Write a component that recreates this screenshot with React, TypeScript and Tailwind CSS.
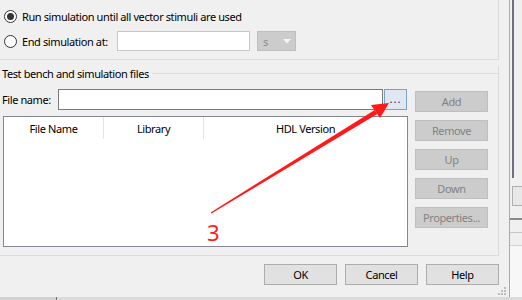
import React from 'react';

const Radio = ({ checked }: { checked?: boolean }) => (
  <span className="w-[13px] h-[13px] rounded-full border border-[#333333] bg-white flex items-center justify-center shrink-0">
    {checked && <span className="w-[7px] h-[7px] rounded-full bg-[#333333]" />}
  </span>
);

const SideButton = ({ label }: { label: string }) => (
  <div className="w-[73px] h-[21px] bg-[#cccccc] border border-[#bfbfbf] text-[#838383] flex items-center justify-center">
    {label}
  </div>
);

const DialogButton = ({ label }: { label: string }) => (
  <div className="w-[73px] h-[21px] bg-[#e1e1e1] border border-[#adadad] text-black flex items-center justify-center">
    {label}
  </div>
);

const App = () => {
  return (
    <div className="relative w-[522px] h-[300px] overflow-hidden bg-[#d9d9d9] text-[11px] tracking-[-0.4px] text-black font-['Noto_Sans','Open_Sans',sans-serif] leading-none whitespace-nowrap">
      <div className="flex h-[297px]">
        {/* dialog */}
        <div className="relative w-[510px] bg-[#f0f0f0] border-r border-[#a8a8a8] pr-[10px] flex flex-col">
          {/* simulation period group */}
          <div className="h-[60px] border-r border-b border-[#dcdcdc] pt-[6px] flex flex-col gap-[5px]">
            <div className="h-[20px] flex items-center pl-[4px] gap-[5px]">
              <Radio checked />
              <span>Run simulation until all vector stimuli are used</span>
            </div>
            <div className="h-[20px] flex items-center pl-[4px]">
              <Radio />
              <span className="ml-[5px] w-[95px]">End simulation at:</span>
              <div className="w-[133px] h-[20px] bg-white border border-[#c8c8c8]" />
              <div className="ml-[7px] w-[39px] h-[20px] bg-[#cccccc] border border-[#bfbfbf] flex items-center justify-between pl-[5px] pr-[4px] text-[#8c8c8c]">
                <span>s</span>
                <svg width="8" height="5" viewBox="0 0 8 5">
                  <path d="M0 0 H8 L4 4.5 Z" fill="#f4f4f4" />
                </svg>
              </div>
            </div>
          </div>

          {/* test bench group */}
          <div className="mt-[6px] h-[190px] border-r border-b border-[#dcdcdc] flex flex-col">
            <div className="h-[14px] flex items-center pl-[2px]">
              <span>Test bench and simulation files</span>
              <div className="flex-1 ml-[3px] h-px bg-[#dcdcdc]" />
            </div>
            <div className="mt-[9px] flex">
              <div className="w-[408px] flex flex-col">
                <div className="h-[21px] flex items-center pl-[2px]">
                  <span className="w-[56px]">File name:</span>
                  <div className="w-[325px] h-[21px] bg-white border border-[#7a7a7a]" />
                  <div className="ml-[1px] w-[23px] h-[21px] bg-[#dfe7f0] border border-[#7ba2cc] flex items-end justify-center text-[#1a1a5a] tracking-[1px] pb-[5px]">
                    ...
                  </div>
                </div>
                <div className="mt-[6px] ml-[3px] w-[405px] h-[131px] bg-white border border-[#828790]">
                  <div className="h-[22px] flex">
                    <div className="w-[100px] border-r border-[#e5e5e5] flex items-center justify-center">File Name</div>
                    <div className="w-[100px] border-r border-[#e5e5e5] flex items-center justify-center">Library</div>
                    <div className="flex-1 flex items-center justify-center">HDL Version</div>
                  </div>
                </div>
              </div>
              <div className="ml-[7px] pt-[2px] flex flex-col gap-[8px]">
                <SideButton label="Add" />
                <SideButton label="Remove" />
                <SideButton label="Up" />
                <SideButton label="Down" />
                <SideButton label="Properties..." />
              </div>
            </div>
          </div>

          {/* dialog buttons */}
          <div className="mt-[8px] flex justify-end gap-[8px]">
            <DialogButton label="OK" />
            <DialogButton label="Cancel" />
            <DialogButton label="Help" />
          </div>

          {/* resize grip */}
          <svg className="absolute right-[2px] bottom-[1px]" width="10" height="10" viewBox="0 0 10 10">
            <rect x="7" y="1" width="2" height="2" fill="#bcbcbc" />
            <rect x="4" y="4" width="2" height="2" fill="#bcbcbc" />
            <rect x="7" y="4" width="2" height="2" fill="#bcbcbc" />
            <rect x="1" y="7" width="2" height="2" fill="#bcbcbc" />
            <rect x="4" y="7" width="2" height="2" fill="#bcbcbc" />
            <rect x="7" y="7" width="2" height="2" fill="#bcbcbc" />
          </svg>
        </div>

        {/* window behind, right edge */}
        <div className="flex-1 bg-[#f0f0f0] flex flex-col">
          <div className="h-[178px] ml-[2px] border-l-2 border-[#6f6f80]" />
          <div className="mt-[8px] h-[20px] ml-[2px] border border-r-0 border-[#b0b0b0] bg-[#e8e8e8]" />
          <div className="mt-[12px] h-[2px] bg-[#8a8a8a]" />
          <div className="mt-[12px] h-px bg-[#c8c8c8]" />
          <div className="mt-[12px] h-px bg-[#d0d0d0]" />
          <div className="flex-1 bg-[#f7f7f7]" />
        </div>
      </div>

      {/* bottom strip */}
      <div className="h-[3px] flex">
        <div className="w-[56px] bg-[#d0d0d0]" />
        <div className="w-px bg-[#707070]" />
        <div className="flex-1 bg-[#dadada]" />
      </div>

      {/* red annotation */}
      <svg className="absolute inset-0 pointer-events-none" width="522" height="300" viewBox="0 0 522 300">
        <polygon points="210.6,212.4 211.4,213.6 377.3,114.1 374.7,109.9" fill="#ff1a1a" />
        <polygon points="389,103 380,118 371,105" fill="#ff1a1a" />
      </svg>
      <span className="absolute left-[207px] top-[219px] text-[22px] leading-[26px] tracking-normal text-[#ff2020] font-['Noto_Sans',sans-serif]">
        3
      </span>
    </div>
  );
};

export default App;
